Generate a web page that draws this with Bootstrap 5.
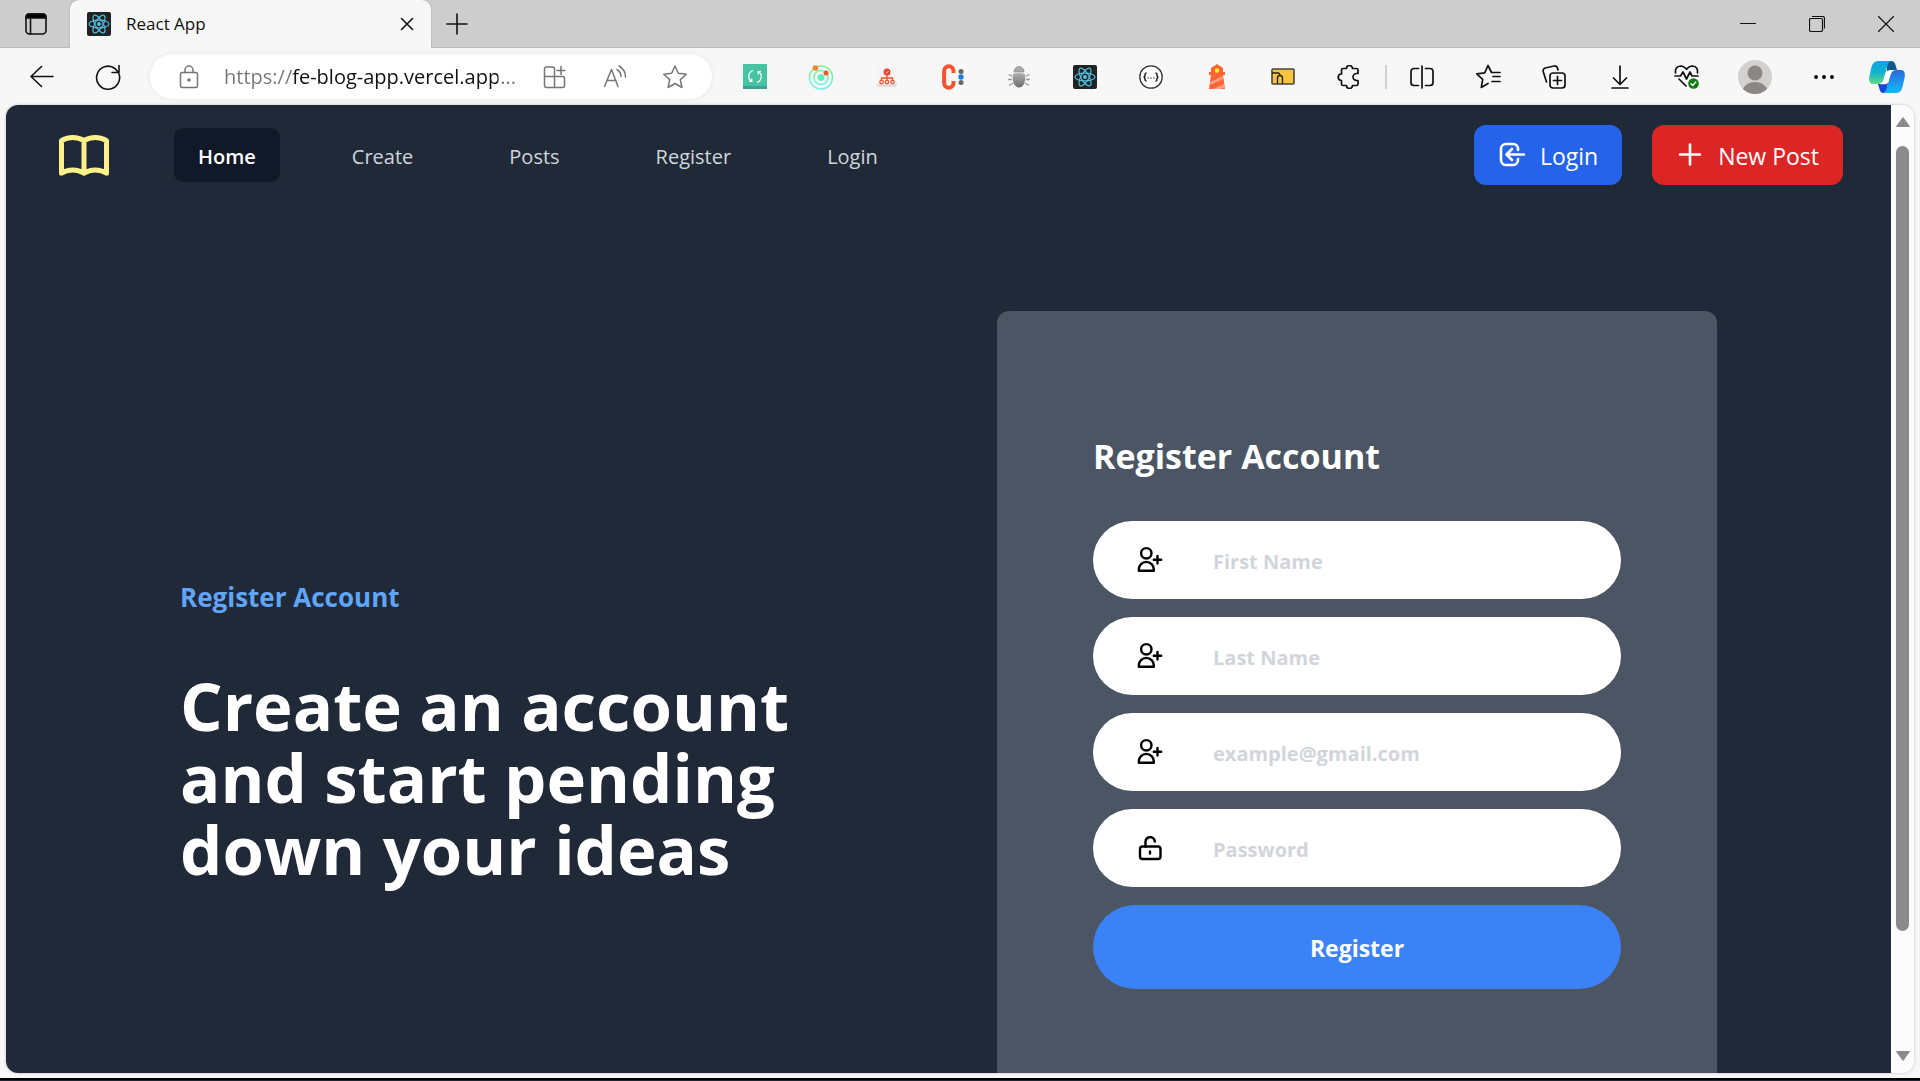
<!DOCTYPE html>
<html lang="en">
<head>
<meta charset="utf-8">
<meta name="viewport" content="width=device-width, initial-scale=1">
<title>React App</title>
<link href="https://cdn.jsdelivr.net/npm/bootstrap@5.3.0/dist/css/bootstrap.min.css" rel="stylesheet">
<style>
body{font-family:"Open Sans","Noto Sans",sans-serif;background:#f7f7f7;color:#111}
svg{display:block;flex:none}
.ln{fill:none;stroke:currentColor;stroke-linecap:round;stroke-linejoin:round}
.plain{border:0;background:none;padding:0;color:inherit;display:flex;align-items:center;justify-content:center;flex:none}
.tabstrip{height:48px;background:#cdcdcd;box-shadow:inset 0 -1px 0 #b9b9b9}
.tab-menu{width:70px;height:48px;padding-left:2px}
.tab-live{width:361px;background:#f7f7f7;border-radius:9px 9px 0 0;padding:0 12px 0 17px;font-size:17px;box-shadow:0 0 2px #999;clip-path:inset(0 -3px 0 -3px)}
.tab-name{margin-left:15px}
.w24{width:24px;height:24px}
.tab-add{width:52px}
.win-btn{width:69px;height:48px}
.toolbar{height:57px;padding:0 3px 0 9px}
.slot{width:66px;height:45px}
.slot-in{width:60px;height:45px}
.slot-me{width:72px}
.address{height:45px;background:#fff;border-radius:23px;margin:0 10px 0 9px;padding:0 7px 0 6px;box-shadow:0 0 4px #e4e4e4;color:#767676}
.address input{border:0;outline:0;min-width:0;padding:0 0 0 2px;font-size:20px;color:transparent;background:linear-gradient(90deg,#767676 70px,#111 70px,#111 276px,#767676 276px);-webkit-background-clip:text;background-clip:text}
.bar-sep{width:2px;height:24px;background:#cfcfcf;margin:0 2px 0 3px}
.frame{margin:0 6px 0 6px;border-radius:12px;overflow:hidden;box-shadow:0 0 3px #bbb;min-height:0}
.site{background:#1f2937;overflow:hidden;min-width:0}
.scroller{width:23px;background:#fcfcfc;padding:12px 0}
.thumb{width:13px;border-radius:7px;background:#8b8b8b;flex:785 1 0;margin-top:19px}
.thumb-rest{flex:120 1 0}
.edge{height:3px;background:#000;margin-top:5px;border-bottom:1px solid #1f2430}
.topnav{padding:20px 48px;font-size:20px;font-weight:600}
.topnav .nav{gap:48px;margin-left:60px}
.topnav .nav-link{color:#d1d5db;padding:14px 24px 10px;line-height:30px;border-radius:9px;font-weight:500}
.topnav .nav-link.active{color:#fff;background:#111827;font-weight:600}
.act-row{gap:30px}
.act{height:60px;border:0;border-radius:12px;padding:2px 24px 0;color:#fff;font-size:23px;font-weight:500;display:flex;align-items:center;gap:14px}
.act svg{margin-top:-2px}
.act-in{background:#2563eb}
.act-new{background:#dc2626}
.hero{padding:106px 174px 0 174px}
.pitch{width:700px;padding-top:268px}
.pitch p{font-size:26px;line-height:36px;font-weight:700;color:#60a5fa;margin:0 0 54px}
.pitch h1{font-size:67px;line-height:72px;font-weight:700;color:#fff;margin:0}
.signup{width:720px;height:840px;border-radius:12px;background:#4b5563;padding:118px 96px;gap:18px}
.signup h2{font-size:34px;line-height:54px;font-weight:700;color:#fff;margin:0 0 20px}
.field{height:78px;border-radius:39px;background:#fff;color:#000;padding-left:42px;gap:48px}
.field input{border:0;outline:0;background:none;padding:3px 0 0;font-size:20px;font-weight:700;min-width:0}
.field input::placeholder{color:#d1d5db;opacity:1}
.send{height:84px;border:0;border-radius:42px;background:#3b82f6;color:#fff;font-size:23px;font-weight:700;padding-top:3px}
</style>
<script src="https://cdn.jsdelivr.net/npm/bootstrap@5.3.0/dist/js/bootstrap.bundle.min.js"></script>
</head>
<body class="vh-100 d-flex flex-column overflow-hidden">
<svg width="0" height="0" class="position-absolute" aria-hidden="true">
  <symbol id="react" viewBox="0 0 24 24"><rect width="24" height="24" rx="2" fill="#202224"/><g fill="none" stroke="#53c1de" stroke-width="1.2"><ellipse cx="12" cy="12" rx="10" ry="3.9"/><ellipse cx="12" cy="12" rx="10" ry="3.9" transform="rotate(60 12 12)"/><ellipse cx="12" cy="12" rx="10" ry="3.9" transform="rotate(120 12 12)"/></g><circle cx="12" cy="12" r="2" fill="#53c1de"/></symbol>
  <symbol id="user-add" viewBox="0 0 30 30"><g fill="none" stroke="#000" stroke-width="2.4" stroke-linecap="round" stroke-linejoin="round"><circle cx="11.300" cy="8.300" r="5.200"/><path d="M3.800 25.800v-1.400a7.500 7.500 0 0 1 15 0v1.400zM22.500 11v7.400M18.800 14.700h7.400"/></g></symbol>
</svg>

<header class="tabstrip d-flex flex-shrink-0">
  <button class="plain tab-menu" aria-label="Tab actions"><svg class="ln" width="22" height="22" viewBox="0 0 22 22" stroke-width="1.6"><rect x="1" y="1" width="20" height="20" rx="3.5"/><path d="M1 5V4a3 3 0 0 1 3-3h14a3 3 0 0 1 3 3v1z" fill="#000"/><path d="M5.500 6v15"/></svg></button>
  <div class="tab-live d-flex align-items-center">
    <svg width="24" height="24"><use href="#react"/></svg>
    <span class="tab-name flex-grow-1">React App</span>
    <button class="plain w24" aria-label="Close tab"><svg class="ln" width="14" height="14" viewBox="0 0 14 14" stroke-width="1.6"><path d="M1.500 1.500l11 11M12.500 1.500l-11 11"/></svg></button>
  </div>
  <button class="plain tab-add" aria-label="New tab"><svg class="ln" width="22" height="22" viewBox="0 0 22 22" stroke-width="1.6"><path d="M11 1v20M1 11h20"/></svg></button>
  <div class="ms-auto d-flex">
    <button class="plain win-btn" aria-label="Minimize"><svg class="ln" width="16" height="16" viewBox="0 0 16 16" stroke-width="1"><path d="M.5 7.500h15"/></svg></button>
    <button class="plain win-btn" aria-label="Restore"><svg class="ln" width="16" height="16" viewBox="0 0 16 16" stroke-width="1.200"><rect x=".5" y="2.500" width="13" height="13" rx="1.500"/><path d="M3.500.5h10a2 2 0 0 1 2 2v9.500"/></svg></button>
    <button class="plain win-btn" aria-label="Close"><svg class="ln" width="16" height="16" viewBox="0 0 16 16" stroke-width="1.200"><path d="M.5.5l15 15M15.500.5l-15 15"/></svg></button>
  </div>
</header>

<div class="toolbar d-flex align-items-center flex-shrink-0">
  <button class="plain slot" aria-label="Back"><svg class="ln" width="24" height="24" viewBox="0 0 24 24" stroke-width="1.600"><path d="M23 11.500H1M11.500 1.500L1 11.500l10.500 10"/></svg></button>
  <button class="plain slot" aria-label="Refresh"><svg class="ln" width="26" height="26" viewBox="0 0 26 26" stroke-width="1.600"><path d="M23.800 9.500A11.500 11.500 0 1 1 20 4.500l3.500 4M24 1.500v7h-7"/></svg></button>
  <div class="address d-flex align-items-center flex-grow-1">
    <button class="plain slot" aria-label="Site information"><svg class="ln" width="20" height="24" viewBox="0 0 20 24" stroke-width="1.500"><rect x="1.500" y="7.500" width="17" height="15" rx="2"/><path d="M6 7.500V5a4 4 0 0 1 8 0v2.500"/><circle cx="10" cy="15" r="1" fill="currentColor"/></svg></button>
    <input class="flex-grow-1" type="text" aria-label="Address" value="https://fe-blog-app.vercel.app...">
    <button class="plain slot-in" aria-label="Install app"><svg class="ln" width="24" height="24" viewBox="0 0 24 24" stroke-width="1.500"><path d="M11.500 11.500H1.500V4a2 2 0 0 1 2-2h6a2 2 0 0 1 2 2v18.500M1.500 11.500v9a2 2 0 0 0 2 2h16a2 2 0 0 0 2-2v-7a2 2 0 0 0-2-2h-8M18 1.500v8M14 5.500h8"/></svg></button>
    <button class="plain slot-in" aria-label="Read aloud"><svg class="ln" width="24" height="24" viewBox="0 0 24 24" stroke-width="1.500"><path d="M1.500 21.500L8.500 4.500l6.500 17M4 15.500h9M14 4.500q4 2.500 4 7M16 1q6.500 3.500 6.500 11"/></svg></button>
    <button class="plain slot-in" aria-label="Add to favorites"><svg class="ln" width="26" height="26" viewBox="0 0 26 26" stroke-width="1.500"><path d="M13 2l3.300 7.300 8 .9-6 5.400 1.700 7.900-7-4-7 4 1.700-7.900-6-5.400 8-.9z"/></svg></button>
  </div>
  <button class="plain slot" aria-label="Refresh extension"><svg width="24" height="25" viewBox="0 0 24 25"><rect width="24" height="25" fill="#3f9f92"/><rect width="24" height="22" fill="#45c3a2"/><path d="M10 6.500a6.200 6.200 0 0 0-1.500 11M14 18.500a6.200 6.200 0 0 0 1.500-11M8.800 14.500v3H6M15.200 10.500v-3H18" fill="none" stroke="#fff" stroke-width="1.200"/></svg></button>
  <button class="plain slot" aria-label="Orbit extension"><svg width="26" height="26" viewBox="0 0 26 26"><defs><linearGradient id="orb" x2="0" y2="1"><stop stop-color="#7df58c"/><stop offset="1" stop-color="#74eff0"/></linearGradient></defs><g fill="none" stroke="url(#orb)" stroke-width="1.600"><circle cx="13" cy="13.500" r="11.500"/><circle cx="13" cy="13.500" r="7"/></g><circle cx="13" cy="13.500" r="3.500" fill="#5cf3b8"/><circle cx="7.500" cy="4" r="2.800" fill="#f58235"/><circle cx="18" cy="9" r="2.500" fill="#f4562e"/></svg></button>
  <button class="plain slot" aria-label="Sitemap extension"><svg width="20" height="20" viewBox="0 0 20 20"><rect width="20" height="20" rx="2" fill="#dedede"/><rect width="20" height="17" rx="2" fill="#f4f4f4"/><circle cx="10" cy="5" r="3.500" fill="#f0412c"/><path d="M8.500 5l1.200 1 2-2" stroke="#ffd" stroke-width=".8" fill="none"/><path d="M10 8v5M4.500 13v-2h11v2" fill="none" stroke="#f0552c" stroke-width="1.400"/><g fill="none" stroke="#f0552c" stroke-width="1.300"><circle cx="4.500" cy="15" r="1.700"/><circle cx="10" cy="15" r="1.700"/><circle cx="15.500" cy="15" r="1.700"/></g></svg></button>
  <button class="plain slot" aria-label="Colour extension"><svg width="24" height="26" viewBox="0 0 24 26"><path d="M12.500 9V7a4.700 4.700 0 0 0-9.400 0v12a4.700 4.700 0 0 0 9.400 0v-2" fill="none" stroke="#f8532c" stroke-width="4"/><circle cx="20" cy="7.500" r="2.500" fill="#666"/><circle cx="20" cy="13" r="2.700" fill="#1e7fe0"/><circle cx="20" cy="18.500" r="2.500" fill="#666"/></svg></button>
  <button class="plain slot" aria-label="Debug extension"><svg width="24" height="24" viewBox="0 0 24 24"><defs><linearGradient id="bug" x2="0" y2="1"><stop stop-color="#b0b0b0"/><stop offset="1" stop-color="#6c6c6c"/></linearGradient></defs><path d="M7 7a5 5.500 0 0 1 10 0z" fill="#aaa" stroke="#888" stroke-width=".7"/><path d="M6 9q6-2 12 0 1 6-1 10-2 3.500-5 3.500T7 19q-2-4-1-10z" fill="url(#bug)"/><path d="M5 11L1.500 9.500M5 14.500H1M6 18l-4 2.500M19 11l3.500-1.500M19 14.500h4M18 18l4 2.500" fill="none" stroke="#999" stroke-width="1.300"/></svg></button>
  <button class="plain slot" aria-label="React Developer Tools"><svg width="24" height="24"><use href="#react"/></svg></button>
  <button class="plain slot" aria-label="JSON extension"><svg width="24" height="24" viewBox="0 0 24 24"><circle cx="12" cy="12" r="11.200" fill="#fff" stroke="#333" stroke-width="1.300"/><path d="M7.500 8Q6 8 6 10t-1.500 2Q6 12 6 14t1.500 2M16.500 8Q18 8 18 10t1.500 2Q18 12 18 14t-1.500 2" fill="none" stroke="#222" stroke-width="1.500"/><path d="M8.500 13h1.500M11.300 13h1.500M14.100 13h1.500" stroke="#333" stroke-width="1.200"/></svg></button>
  <button class="plain slot" aria-label="Lighthouse"><svg width="18" height="25" viewBox="0 0 18 25"><path d="M9 0l6 4v4h2v3h-2l2 14H1L3 11H1V8h2V4z" fill="#ff6434"/><path d="M2.500 18l12-6 .5 3-13 6zM5 25l11-5 1 3-4 2z" fill="#ffa186"/><circle cx="9" cy="6.500" r="2.200" fill="#ffee20"/></svg></button>
  <button class="plain slot" aria-label="Folder extension"><svg width="24" height="17" viewBox="0 0 24 17"><rect x="1" y="1" width="22" height="15" rx="1" fill="#f7c53d" stroke="#444" stroke-width="1.600"/><path d="M1 5h6q2 0 2 3M6.500 16v-6q0-2.500 2.500-2.500t2.500 2.500v6" fill="none" stroke="#222" stroke-width="1.300"/></svg></button>
  <button class="plain slot" aria-label="Extensions"><svg class="ln" width="24" height="24" viewBox="0 0 24 24" stroke-width="1.700"><path d="M6 3.500h3.500a3 3 0 0 1 6 0h4A1.500 1.500 0 0 1 21 5v3.500h-1.500a3.500 3.500 0 0 0 0 7H21V19a1.500 1.500 0 0 1-1.500 1.500h-4a3 3 0 0 1-6 0H6A1.500 1.500 0 0 1 4.500 19v-3.500a3.200 3.200 0 0 1 0-6.500V5A1.500 1.500 0 0 1 6 3.500z"/></svg></button>
  <span class="bar-sep"></span>
  <button class="plain slot" aria-label="Split screen"><svg class="ln" width="24" height="24" viewBox="0 0 24 24" stroke-width="1.700"><path d="M12 1v22M8.500 3.500H4a3 3 0 0 0-3 3v11a3 3 0 0 0 3 3h4.500M15.500 3.500H20a3 3 0 0 1 3 3v11a3 3 0 0 1-3 3h-4.500"/></svg></button>
  <button class="plain slot" aria-label="Favorites"><svg class="ln" width="26" height="26" viewBox="0 0 26 26" stroke-width="1.700"><path d="M19 8.500H16.500L13 1.500 9.700 8.800l-8 1 6 5.500L6.300 23.500l6.700-4M18 12.500h7M17 8.500h8M17 17.500h8"/></svg></button>
  <button class="plain slot" aria-label="Collections"><svg class="ln" width="24" height="24" viewBox="0 0 24 24" stroke-width="1.700"><rect x="8" y="8" width="15" height="15" rx="3"/><path d="M15.500 11.500v8M11.500 15.500h8M4.500 17L1.200 6.500a3 3 0 0 1 2-3.500L12 1a3 3 0 0 1 3.500 2L16 5"/></svg></button>
  <button class="plain slot" aria-label="Downloads"><svg class="ln" width="18" height="24" viewBox="0 0 18 24" stroke-width="1.700"><path d="M9 1v18M2.500 13L9 19.500l6.500-6.500M1 23h16"/></svg></button>
  <button class="plain slot" aria-label="Browser essentials"><svg class="ln" width="25" height="25" viewBox="0 0 25 25" stroke-width="1.700"><path d="M1.500 9Q.8 2.500 6.500 2q3.500 0 6 3.300Q15 2 18.500 2q5.700.5 5 7M1 12h5.500l2.500-4 3.500 7 3.500-7 2 4h6M5 15l7 7"/><circle cx="19.500" cy="19.500" r="5.300" fill="#107c10" stroke="none"/><path d="M17 19.800l1.800 1.700 3-3.500" stroke="#fff" stroke-width="1.300"/></svg></button>
  <button class="plain slot slot-me" aria-label="Profile"><svg width="34" height="34" viewBox="0 0 34 34"><clipPath id="me"><circle cx="17" cy="17" r="17"/></clipPath><g clip-path="url(#me)"><rect width="34" height="34" fill="#d3d1cf"/><circle cx="17" cy="13" r="7.500" fill="#8b8785"/><ellipse cx="17" cy="33" rx="13" ry="11" fill="#8b8785"/></g></svg></button>
  <button class="plain slot" aria-label="Settings and more"><svg width="20" height="4" viewBox="0 0 20 4"><circle cx="2" cy="2" r="1.900"/><circle cx="10" cy="2" r="1.900"/><circle cx="18" cy="2" r="1.900"/></svg></button>
  <button class="plain slot-in" aria-label="Copilot"><svg width="36" height="32" viewBox="0 0 36 32"><defs><linearGradient id="cpa" x2="0" y2="1"><stop stop-color="#0fa5e8"/><stop offset=".5" stop-color="#10b3cf"/><stop offset="1" stop-color="#5fdc7c"/></linearGradient><linearGradient id="cpb" x2="0" y2="1"><stop stop-color="#2a6bdc"/><stop offset="1" stop-color="#16b8f8"/></linearGradient></defs><path d="M18 0h4q3.500 0 4.500 4l1.500 5h-5q-3.500 0-5 4z" fill="#0f5a8f"/><path d="M18 32h-4q-2.500 0-3.500-4L9 23h5q3.500 0 5-4z" fill="#1746d6"/><path d="M9 0h13q-3 1-4 6l-3 11q-1.500 6-6 6H4q-5 0-3.500-8l2-9Q4 0 9 0z" fill="url(#cpa)"/><path d="M27 32H14q3-1 4-6l3-11q1.500-6 6-6h5q5 0 3.500 8l-2 9q-1.500 6-6.500 6z" fill="url(#cpb)"/><path d="M22 9h3.500Q22.500 9.500 21 15l-1.500 5.500Q18.700 23.500 14 23.300h-3Q14 22 15 17l1.300-4.500Q17.500 9 22 9z" fill="#fff"/></svg></button>
</div>

<div class="frame d-flex flex-grow-1">
  <main class="site flex-grow-1">
    <nav class="topnav d-flex align-items-center">
      <a href="#" aria-label="Blog home"><svg class="ln" width="60" height="60" viewBox="0 0 24 24" stroke-width="2" color="#fef08a"><path d="M12 6.253v13m0-13C10.832 5.477 9.246 5 7.500 5S4.168 5.477 3 6.253v13C4.168 18.477 5.754 18 7.500 18s3.332.477 4.500 1.253m0-13C13.168 5.477 14.754 5 16.500 5c1.747 0 3.332.477 4.500 1.253v13C19.832 18.477 18.247 18 16.500 18c-1.746 0-3.332.477-4.500 1.253"/></svg></a>
      <div class="nav">
        <a class="nav-link active" href="#">Home</a>
        <a class="nav-link" href="#">Create</a>
        <a class="nav-link" href="#">Posts</a>
        <a class="nav-link" href="#">Register</a>
        <a class="nav-link" href="#">Login</a>
      </div>
      <div class="d-flex ms-auto act-row">
        <button class="act act-in" type="button"><svg class="ln" width="28" height="28" viewBox="0 0 28 28" stroke-width="2.600"><path d="M20 9V8a5 5 0 0 0-5-5H8a5 5 0 0 0-5 5v11a5 5 0 0 0 5 5h7a5 5 0 0 0 5-5v-1M26 13.500H9M14 8l-5.500 5.500L14 19"/></svg>Login</button>
        <button class="act act-new" type="button"><svg class="ln" width="28" height="28" viewBox="0 0 28 28" stroke-width="2.600"><path d="M14 3.500v20M4 13.500h20"/></svg>New Post</button>
      </div>
    </nav>
    <div class="hero d-flex justify-content-between">
      <section class="pitch">
        <p>Register Account</p>
        <h1>Create an account and start pending down your ideas</h1>
      </section>
      <form class="signup d-flex flex-column flex-shrink-0">
        <h2>Register Account</h2>
        <label class="field d-flex align-items-center flex-shrink-0"><svg width="30" height="30"><use href="#user-add"/></svg><input class="flex-grow-1" type="text" aria-label="First Name" placeholder="First Name"></label>
        <label class="field d-flex align-items-center flex-shrink-0"><svg width="30" height="30"><use href="#user-add"/></svg><input class="flex-grow-1" type="text" aria-label="Last Name" placeholder="Last Name"></label>
        <label class="field d-flex align-items-center flex-shrink-0"><svg width="30" height="30"><use href="#user-add"/></svg><input class="flex-grow-1" type="email" aria-label="Email" placeholder="example@gmail.com"></label>
        <label class="field d-flex align-items-center flex-shrink-0"><svg class="ln" width="30" height="30" viewBox="0 0 30 30" stroke-width="2.400"><rect x="5" y="13.500" width="20.500" height="12.500" rx="2.500"/><path d="M10.500 13.500V8.500a4.700 4.700 0 0 1 9-1.500l.3 1.500M15 18.500v2"/></svg><input class="flex-grow-1" type="password" aria-label="Password" placeholder="Password"></label>
        <button class="send flex-shrink-0" type="submit">Register</button>
      </form>
    </div>
  </main>
  <div class="scroller d-flex flex-column align-items-center flex-shrink-0">
    <svg width="14" height="10" viewBox="0 0 14 10"><path d="M7 .5L13.500 9.500H.5z" fill="#8b8b8b" stroke="#8b8b8b" stroke-linejoin="round"/></svg>
    <div class="thumb"></div>
    <div class="thumb-rest"></div>
    <svg width="14" height="10" viewBox="0 0 14 10"><path d="M7 9.500L13.500.5H.5z" fill="#8b8b8b" stroke="#8b8b8b" stroke-linejoin="round"/></svg>
  </div>
</div>
<div class="edge flex-shrink-0"></div>
</body>
</html>
